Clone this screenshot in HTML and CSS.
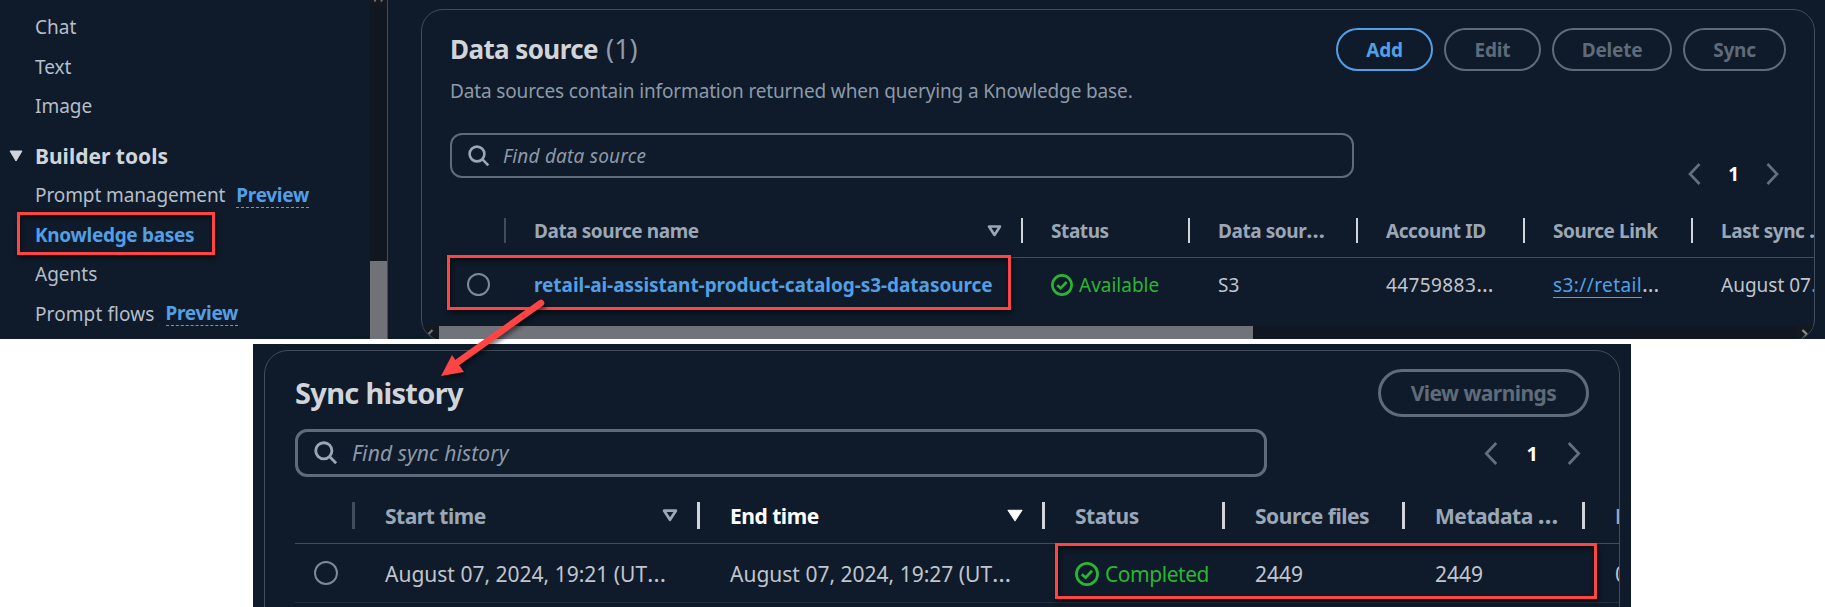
FILE: index.html
```html
<!DOCTYPE html>
<html lang="en">
<head>
<meta charset="utf-8">
<title>Knowledge bases</title>
<link rel="stylesheet" href="styles.css">
</head>
<body>
<div class="page">
  <section class="console">
    <nav class="sidebar">
      <a class="item">Chat</a>
      <a class="item">Text</a>
      <a class="item item-last">Image</a>
      <div class="group">
        <svg width="14" height="12" viewBox="0 0 14 12"><path d="M1 1h12L7 11z" fill="#d1d5db" stroke="#d1d5db" stroke-linejoin="round"/></svg>
        <span>Builder tools</span>
      </div>
      <a class="item"><span class="snug">Prompt management</span><b class="preview">Preview</b></a>
      <a class="item active">Knowledge bases</a>
      <a class="item">Agents</a>
      <a class="item"><span class="loose">Prompt flows</span><b class="preview">Preview</b></a>
    </nav>
    <div class="vscroll">
      <svg class="vup" width="17" height="7" viewBox="0 0 17 7"><path d="M4.5 1.5 L5.5 0 M11 0 L12 1.5" stroke="#70747c" stroke-width="2"/></svg>
      <div class="vthumb"></div>
    </div>
    <main class="main">
      <div class="card card-top">
        <header class="head">
          <div>
            <h2 class="title">Data source <span class="count">(1)</span></h2>
            <p class="desc">Data sources contain information returned when querying a Knowledge base.</p>
          </div>
          <div class="buttons">
            <button class="btn primary w-add">Add</button>
            <button class="btn w-edit">Edit</button>
            <button class="btn w-delete">Delete</button>
            <button class="btn w-sync">Sync</button>
          </div>
        </header>
        <div class="tools">
          <div class="search">
            <svg width="22" height="22" viewBox="0 0 22 22" fill="none" stroke="#9ba7b6" stroke-width="2.6"><circle cx="9" cy="9" r="7.4"/><path d="M14.2 14.2 20.3 20.3"/></svg>
            <span>Find data source</span>
          </div>
          <div class="pager">
            <svg width="13" height="22" viewBox="0 0 13 22" fill="none" stroke="#656f80" stroke-width="2.6"><path d="M11.5 1 2 11l9.5 10"/></svg>
            <b>1</b>
            <svg width="13" height="22" viewBox="0 0 13 22" fill="none" stroke="#656f80" stroke-width="2.6"><path d="M1.5 1 11 11 1.5 21"/></svg>
          </div>
        </div>
        <div class="grid ds-grid ds-head">
          <div class="th dim"></div>
          <div class="th"><span>Data source name</span><svg class="sort" width="15" height="12" viewBox="0 0 15 12"><path d="M2 1.5h11L7.5 10z" fill="none" stroke="#9ba7b6" stroke-width="2.6" stroke-linejoin="round"/></svg></div>
          <div class="th"><span>Status</span></div>
          <div class="th"><span>Data sour<span class="ell">…</span></span></div>
          <div class="th"><span>Account ID</span></div>
          <div class="th"><span>Source Link</span></div>
          <div class="th"><span>Last sync <span class="ell">…</span></span></div>
        </div>
        <div class="grid ds-grid ds-row">
          <div class="td-radio"><i class="radio"></i></div>
          <div class="td"><a class="name">retail-ai-assistant-product-catalog-s3-datasource</a></div>
          <div class="td ok"><svg width="22" height="22" viewBox="0 0 22 22" fill="none" stroke="#2bb534" stroke-width="2.6"><circle cx="11" cy="11" r="9.6"/><path d="M6.2 11.2 9.7 14.3 15.6 8"/></svg><span>Available</span></div>
          <div class="td"><span>S3</span></div>
          <div class="td"><span><span class="wide">44759883</span><span class="ell">…</span></span></div>
          <div class="td"><span><a class="uri wide">s3://retail</a><span class="ell">…</span></span></div>
          <div class="td"><span>August 07<span class="ell blue">…</span></span></div>
        </div>
        <div class="hscroll">
          <div class="harrow"><svg width="8" height="12" viewBox="0 0 8 12" fill="none" stroke="#70747c" stroke-width="2.2"><path d="M6.5 1 2 5.5 6.5 10"/></svg></div>
          <div class="hthumb"></div>
          <div class="harrow end"><svg width="8" height="12" viewBox="0 0 8 12" fill="none" stroke="#8d9095" stroke-width="2.2"><path d="M1.5 1 6 5.5 1.5 10"/></svg></div>
        </div>
      </div>
    </main>
  </section>

  <section class="history">
    <div class="card card-bottom">
      <header class="sh-head">
        <h2 class="title">Sync history</h2>
        <button class="btn btn-lg">View warnings</button>
      </header>
      <div class="sh-tools">
        <div class="search search-lg">
          <svg width="24" height="24" viewBox="0 0 22 22" fill="none" stroke="#9ba7b6" stroke-width="2.6"><circle cx="9" cy="9" r="7.4"/><path d="M14.2 14.2 20.3 20.3"/></svg>
          <span>Find sync history</span>
        </div>
        <div class="pager pager-lg">
          <svg width="14" height="23" viewBox="0 0 13 22" fill="none" stroke="#656f80" stroke-width="2.6"><path d="M11.5 1 2 11l9.5 10"/></svg>
          <b>1</b>
          <svg width="14" height="23" viewBox="0 0 13 22" fill="none" stroke="#656f80" stroke-width="2.6"><path d="M1.5 1 11 11 1.5 21"/></svg>
        </div>
      </div>
      <div class="grid sh-grid sh-th">
        <div class="th dim"></div>
        <div class="th"><span>Start time</span><svg class="sort" width="16" height="13" viewBox="0 0 15 12"><path d="M2 1.5h11L7.5 10z" fill="none" stroke="#9ba7b6" stroke-width="2.6" stroke-linejoin="round"/></svg></div>
        <div class="th sorted"><span>End time</span><svg class="sort" width="16" height="13" viewBox="0 0 15 12"><path d="M1 1h13L7.5 11z" fill="#fff" stroke="#fff" stroke-linejoin="round"/></svg></div>
        <div class="th"><span>Status</span></div>
        <div class="th"><span>Source files</span></div>
        <div class="th"><span>Metadata <span class="ell">…</span></span></div>
        <div class="th"><span>D</span></div>
      </div>
      <div class="grid sh-grid sh-row">
        <div class="td-radio"><i class="radio radio-lg"></i></div>
        <div class="td"><span>August 07, 2024, 19:21 (UT<span class="ell">…</span></span></div>
        <div class="td"><span>August 07, 2024, 19:27 (UT<span class="ell">…</span></span></div>
        <div class="td ok"><svg width="24" height="24" viewBox="0 0 22 22" fill="none" stroke="#2bb534" stroke-width="2.5"><circle cx="11" cy="11" r="9.7"/><path d="M6.2 11.2 9.7 14.3 15.6 8"/></svg><span class="done">Completed</span></div>
        <div class="td"><span>2449</span></div>
        <div class="td"><span>2449</span></div>
        <div class="td"><span>0</span></div>
      </div>
    </div>
  </section>

  <div class="mark mark-nav"></div>
  <div class="mark mark-source"></div>
  <div class="mark mark-status"></div>
  <svg class="arrow" width="130" height="100" viewBox="0 0 130 100"><path d="M111 13 28 72" stroke="#ff4444" stroke-width="6.5" stroke-linecap="round"/><path d="M11 86 22 65 34 82z" fill="#ff4444"/></svg>
</div>
</body>
</html>
```
FILE: styles.css
```css
* { box-sizing: border-box; }
body { margin: 0; background: #fff; font-family: "Noto Sans", "Open Sans", sans-serif; font-size: 19px; color: #c0c5ce; }
.page { position: relative; width: 1825px; height: 607px; overflow: hidden; white-space: nowrap; }
h2, p { margin: 0; }
svg { display: block; flex: none; }

.console { display: flex; height: 339px; background: #0f1b2a; overflow: hidden; }
.sidebar { flex: none; width: 370px; padding: 7.5px 0 0 35px; }
.item { display: flex; align-items: center; height: 39.4px; color: #b6bec9; }
.item-last { margin-bottom: 10px; }
.group { display: flex; align-items: center; height: 40px; margin-left: -26px; gap: 12px; color: #d1d5db; font-weight: 700; font-size: 21px; }
.active { color: #539fe5; font-weight: 700; letter-spacing: -0.3px; }
.snug { letter-spacing: -0.1px; }
.loose { letter-spacing: 0.1px; }
.wide { letter-spacing: 0.4px; }
.preview { margin-left: 11px; color: #539fe5; line-height: 24px; border-bottom: 1px dashed #539fe5; letter-spacing: -0.3px; }

.vscroll { flex: none; display: flex; flex-direction: column; justify-content: space-between; width: 17px; background: #111721; }
.vup { background: #14181f; }
.vthumb { height: 78px; background: #707278; }

.main { flex: 1; min-width: 0; border-left: 1px solid #414d5c; padding: 9px 10px 0 33px; }
.card { border: 1px solid #414d5c; overflow: hidden; }
.card-top { height: 332px; border-radius: 22px; }
.head { display: flex; justify-content: space-between; height: 106px; padding: 18px 28px 0 28px; }
.title { color: #d1d5db; font-size: 26px; line-height: 42px; font-weight: 700; letter-spacing: -0.6px; }
.count { margin-left: 2px; font-size: 27px; color: #8d99a8; font-weight: 400; letter-spacing: 0; }
.desc { color: #8d99a8; line-height: 26px; margin-top: 8px; letter-spacing: -0.14px; }
.buttons { display: flex; gap: 11px; }
.btn { height: 43px; padding: 0; border: 2px solid #5f6b7a; border-radius: 22px; background: none; color: #5f6b7a; font: 700 19px "Noto Sans", sans-serif; letter-spacing: -0.2px; }
.primary { border-color: #539fe5; color: #539fe5; }
.w-add { width: 97px; }
.w-edit { width: 97px; }
.w-delete { width: 120px; }
.w-sync { width: 103px; }

.tools { display: flex; justify-content: space-between; height: 91px; padding: 17px 35px 0 28px; }
.search { display: flex; align-items: center; gap: 13px; width: 904px; height: 45px; padding-left: 16px; border: 2px solid #5f6b7a; border-radius: 12px; color: #8d99a8; font-style: italic; letter-spacing: 0.2px; }
.pager { display: flex; align-items: center; gap: 27px; height: 22px; margin-top: 30px; color: #fff; }

.grid { display: grid; }
.ds-grid { grid-template-columns: 56px 517px 167px 168px 167px 168px 167px; margin-left: 28px; }
.ds-head { height: 51px; border-bottom: 1px solid #414d5c; }
.th { display: flex; align-items: center; height: 25px; margin-top: 11px; padding-left: 28px; border-right: 2px solid #d1d5db; color: #9ba7b6; font-weight: 700; line-height: 25px; letter-spacing: -0.42px; }
.th > span { padding-top: 2px; }
.dim { border-color: #414d5c; }
.sort { margin: 0 19px 0 auto; }
.ds-row { height: 68px; }
.td { display: flex; align-items: center; height: 54px; padding-left: 28px; }
.ell { font-size: 1.15em; line-height: 0; letter-spacing: 0; }
.ok { color: #2bb534; gap: 6px; }
.td-radio { height: 54px; padding: 15px 0 0 17px; }
.radio { display: block; width: 23px; height: 23px; border: 2.5px solid #7d8998; border-radius: 50%; }
.name { color: #539fe5; font-weight: 700; letter-spacing: -0.05px; }
.uri { display: inline-block; color: #539fe5; line-height: 24px; border-bottom: 1px solid #539fe5; }
.blue { color: #539fe5; }
.hscroll { display: flex; height: 17px; background: #111722; }
.harrow { flex: none; width: 17px; padding: 3px 0 0 4px; background: #14181f; }
.hthumb { width: 814px; background: #70737a; }
.end { margin-left: auto; }

.history { overflow: hidden; width: 1378px; height: 263px; margin: 5px 0 0 253px; padding: 6px 11px 0; background: #0f1b2a; }
.card-bottom { height: 280px; border-radius: 24px; }
.sh-head { display: flex; justify-content: space-between; height: 78px; padding: 18px 30px 0; }
.sh-head .title { line-height: 48px; font-size: 29px; letter-spacing: -0.7px; }
.btn-lg { width: 211px; height: 48px; border-width: 3px; border-radius: 24px; font-size: 21px; letter-spacing: -0.55px; }
.sh-tools { display: flex; justify-content: space-between; height: 63px; padding: 0 38px 0 30px; }
.search-lg { width: 972px; height: 48px; border-width: 3px; font-size: 21px; gap: 14px; letter-spacing: 0.1px; }
.pager-lg { gap: 29px; margin-top: 13px; font-size: 20px; }
.sh-grid { grid-template-columns: 60px 345px 345px 180px 180px 180px 180px; margin-left: 30px; font-size: 21px; }
.sh-th { height: 52px; border-bottom: 1px solid #414d5c; }
.sh-row { height: 59px; border-bottom: 1px solid #232f3e; }
.sh-grid .th { height: 27px; line-height: 27px; margin-top: 10px; padding-left: 30px; border-right-width: 3px; letter-spacing: -0.48px; }
.sh-grid .sort { margin-right: 19px; }
.sh-grid .sorted { color: #fff; }
.sh-grid .td { padding-left: 30px; height: 60px; }
.sh-grid .td-radio { padding: 17px 0 0 19px; }
.done { letter-spacing: -0.45px; }
.radio-lg { width: 24px; height: 24px; }

.mark { position: absolute; border: 3px solid #ff4444; box-shadow: 1px 3px 5px rgba(0,0,0,.5), inset 1px 3px 5px rgba(0,0,0,.5); }
.mark-nav { left: 17px; top: 212px; width: 198px; height: 43px; }
.mark-source { left: 447px; top: 255px; width: 564px; height: 55px; }
.mark-status { left: 1055px; top: 543px; width: 542px; height: 56px; }
.arrow { position: absolute; left: 430px; top: 290px; filter: drop-shadow(2px 3px 2px rgba(0,0,0,.5)); }
```
